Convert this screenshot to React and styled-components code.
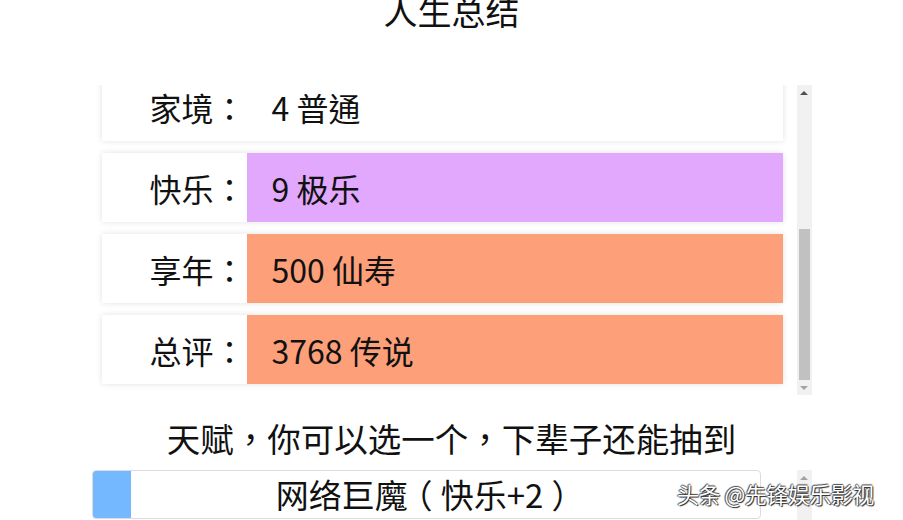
import React, { useLayoutEffect, useRef, useState } from 'react'
import styled, { createGlobalStyle } from 'styled-components'

const GlobalStyle = createGlobalStyle`
  body {
    margin: 0;
    background: #fff;
    font-family: "Noto Sans CJK TC", "Noto Sans CJK SC", "Noto Sans", sans-serif;
    color: #111;
    overflow: hidden;
  }
`

const Page = styled.div`
  position: relative;
  width: 903px;
  height: 520px;
  overflow: hidden;
`
const Main = styled.div`
  width: 720px;
  margin: 0 auto;
`
const Title = styled.h1`
  margin: -6px 0 0;
  height: 91px;
  font-size: 34px;
  font-weight: 400;
  line-height: 34px;
  text-align: center;
`

const Panel = styled.div`
  display: flex;
  height: ${props => props.height}px;
`
const ScrollArea = styled.div`
  flex: 1;
  overflow-y: scroll;
  scrollbar-width: none;
  padding: 8px 14px 11px 10px;
  display: flex;
  flex-direction: column;
  gap: 12px;
  &::-webkit-scrollbar {
    display: none;
  }
`

const ScrollBar = styled.div`
  width: 15px;
  flex-shrink: 0;
  background: #f1f1f1;
  display: flex;
  flex-direction: column;
`
const ArrowButton = styled.div`
  height: 15px;
  flex-shrink: 0;
  display: flex;
  align-items: center;
  justify-content: center;
  &::after {
    content: "";
    border-left: 4px solid transparent;
    border-right: 4px solid transparent;
    ${props => props.dir === 'up'
      ? `border-bottom: 4px solid ${props.disabled ? '#a3a3a3' : '#505050'};`
      : `border-top: 4px solid ${props.disabled ? '#a3a3a3' : '#505050'};`}
  }
`
const Track = styled.div`
  flex: 1;
  position: relative;
`
const Thumb = styled.div`
  position: absolute;
  left: 2px;
  right: 2px;
  background: #c1c1c1;
`

const Row = styled.div`
  display: flex;
  flex-shrink: 0;
  height: 69px;
  background: #fff;
  box-shadow: 0 0 6px rgba(0, 0, 0, 0.12);
  font-size: 32px;
`
const Label = styled.div`
  width: 145px;
  padding-right: 1px;
  box-sizing: border-box;
  display: flex;
  align-items: center;
  justify-content: flex-end;
`
const Value = styled.div`
  flex: 1;
  display: flex;
  align-items: center;
  padding-left: 25px;
  background: ${props => gradeColors[props.grade]};
`

const Hint = styled.div`
  height: 75px;
  box-sizing: border-box;
  padding-top: 9px;
  display: flex;
  align-items: center;
  justify-content: center;
  font-size: 33.5px;
`

// full-width punctuation drawn centred in its cell, as on the original page
const Punct = styled.span`
  font-feature-settings: "halt";
  padding: 0 0.25em;
`

const TalentList = styled.div`
  flex: 1;
  padding-right: 36px;
  overflow: hidden;
`
const TalentItem = styled.div`
  display: flex;
  height: 47px;
  border: 1px solid #dcdcdc;
  border-radius: 4px;
  overflow: hidden;
  font-size: 33px;
  background: #fff;
`
const Strip = styled.div`
  width: 38px;
  flex-shrink: 0;
  background: ${props => gradeColors[props.grade]};
`
const TalentName = styled.div`
  flex: 1;
  margin-right: 38px;
  display: flex;
  align-items: center;
  justify-content: center;
  line-height: 1;
  white-space: pre;
`

const Watermark = styled.div`
  position: absolute;
  left: 677px;
  top: 477px;
  font-family: "Noto Sans CJK SC", sans-serif;
  font-size: 22px;
  color: #fff;
  letter-spacing: -0.5px;
  text-shadow: 1px 1px 1px #222, -1px 0 1px #444, 0 -1px 1px #444;
`

const gradeColors = ['#ffffff', '#74b9ff', '#e1a8fd', '#fd9f78']

const summary = [
  { label: '颜值', value: '8 漂亮', grade: 2 },
  { label: '智力', value: '6 聪明', grade: 1 },
  { label: '体质', value: '7 强壮', grade: 1 },
  { label: '家境', value: '4 普通', grade: 0 },
  { label: '快乐', value: '9 极乐', grade: 2 },
  { label: '享年', value: '500 仙寿', grade: 3 },
  { label: '总评', value: '3768 传说', grade: 3 },
]

const SummaryList = () => {
  const ref = useRef(null)
  const [thumb, setThumb] = useState({ top: 0, height: 0 })

  useLayoutEffect(() => {
    const el = ref.current
    el.scrollTop = el.scrollHeight
    const track = el.clientHeight - 30
    const height = Math.round(track * el.clientHeight / el.scrollHeight)
    const max = el.scrollHeight - el.clientHeight
    const top = max > 0 ? Math.round((track - height) * el.scrollTop / max) : 0
    setThumb({ top, height })
  }, [])

  return (
    <Panel height={310}>
      <ScrollArea ref={ref}>
        {summary.map(item => (
          <Row key={item.label}>
            <Label>{item.label}：</Label>
            <Value grade={item.grade}>{item.value}</Value>
          </Row>
        ))}
      </ScrollArea>
      <ScrollBar>
        <ArrowButton dir="up" />
        <Track>
          <Thumb style={{ top: thumb.top, height: thumb.height }} />
        </Track>
        <ArrowButton dir="down" disabled />
      </ScrollBar>
    </Panel>
  )
}

const App = () => {
  return (
    <Page>
      <GlobalStyle />
      <Main>
        <Title>人生总结</Title>
        <SummaryList />
        <Hint>
          天赋<Punct>，</Punct>你可以选一个<Punct>，</Punct>下辈子还能抽到
        </Hint>
        <Panel height={60}>
          <TalentList>
            <TalentItem>
              <Strip grade={1} />
              <TalentName>
                网络巨魔<Punct>（</Punct>快乐+2<Punct>）</Punct>
              </TalentName>
            </TalentItem>
          </TalentList>
          <ScrollBar>
            <ArrowButton dir="up" disabled />
          </ScrollBar>
        </Panel>
      </Main>
      <Watermark>头条 @先锋娱乐影视</Watermark>
    </Page>
  )
}

export default App
